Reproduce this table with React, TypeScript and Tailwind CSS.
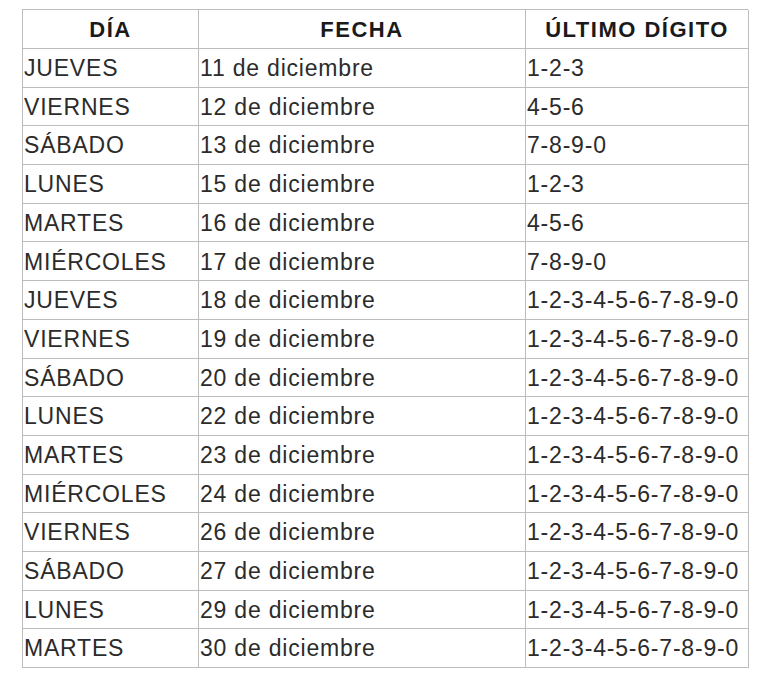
const rows: [string, string, string][] = [
  ['JUEVES', '11 de diciembre', '1-2-3'],
  ['VIERNES', '12 de diciembre', '4-5-6'],
  ['SÁBADO', '13 de diciembre', '7-8-9-0'],
  ['LUNES', '15 de diciembre', '1-2-3'],
  ['MARTES', '16 de diciembre', '4-5-6'],
  ['MIÉRCOLES', '17 de diciembre', '7-8-9-0'],
  ['JUEVES', '18 de diciembre', '1-2-3-4-5-6-7-8-9-0'],
  ['VIERNES', '19 de diciembre', '1-2-3-4-5-6-7-8-9-0'],
  ['SÁBADO', '20 de diciembre', '1-2-3-4-5-6-7-8-9-0'],
  ['LUNES', '22 de diciembre', '1-2-3-4-5-6-7-8-9-0'],
  ['MARTES', '23 de diciembre', '1-2-3-4-5-6-7-8-9-0'],
  ['MIÉRCOLES', '24 de diciembre', '1-2-3-4-5-6-7-8-9-0'],
  ['VIERNES', '26 de diciembre', '1-2-3-4-5-6-7-8-9-0'],
  ['SÁBADO', '27 de diciembre', '1-2-3-4-5-6-7-8-9-0'],
  ['LUNES', '29 de diciembre', '1-2-3-4-5-6-7-8-9-0'],
  ['MARTES', '30 de diciembre', '1-2-3-4-5-6-7-8-9-0'],
];

// Calendar of dates by last digit
const App = () => {
  return (
    <div className="min-h-[680px] w-[760px] bg-white pt-[9px] pl-[22px] font-['Liberation_Sans',Arial,sans-serif]">
      <div className="grid w-[726px] grid-cols-[176px_327px_223px] border-l border-t border-[#bcbcbc]">
        {/* Header */}
        {['DÍA', 'FECHA', 'ÚLTIMO DÍGITO'].map((h) => (
          <div
            key={h}
            className="flex h-[39px] items-center justify-center border-b border-r border-[#bcbcbc] pt-[1px] text-[22px] font-bold tracking-[1.5px] text-[#1a1a1a]"
          >
            {h}
          </div>
        ))}

        {/* Rows */}
        {rows.map((r, i) =>
          r.map((cell, j) => (
            <div
              key={`${i}-${j}`}
              className="flex h-[38.7px] items-center border-b border-r border-[#bcbcbc] pl-[1px] pt-[1px] text-[23px] tracking-[0.8px] text-[#2b2b2b]"
            >
              {cell}
            </div>
          ))
        )}
      </div>
    </div>
  );
};

export default App;
